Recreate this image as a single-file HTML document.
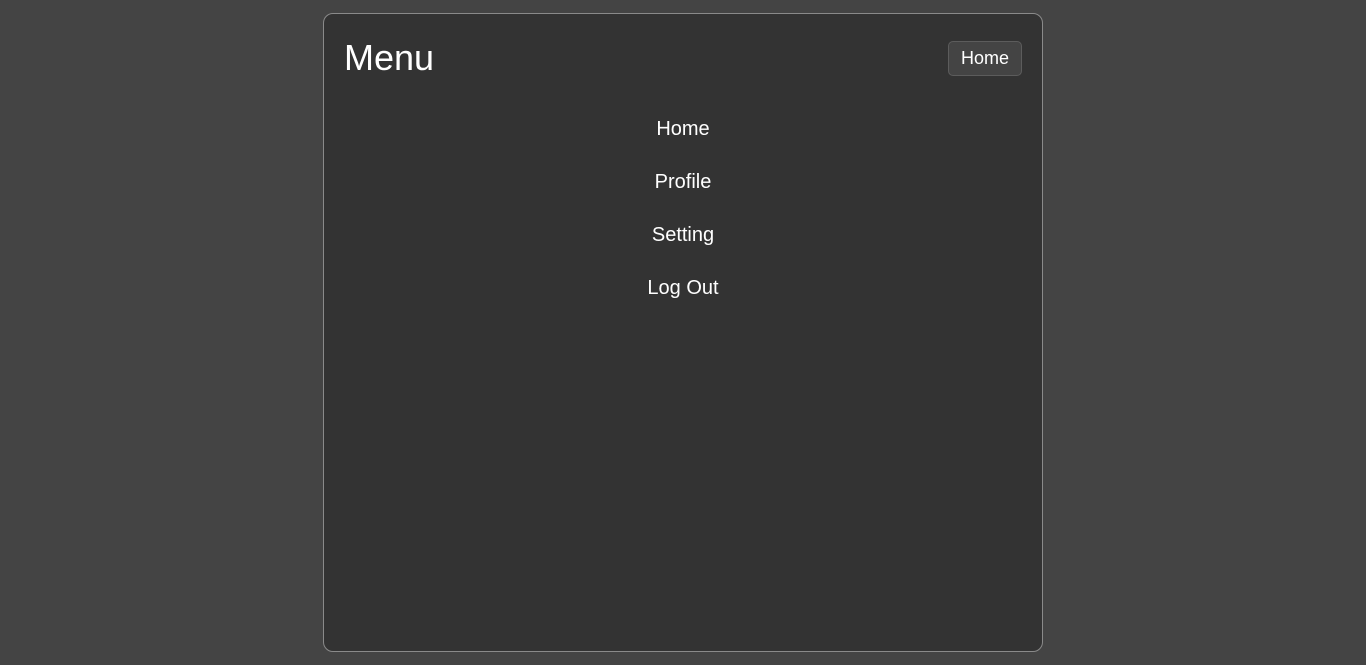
<!DOCTYPE html>
<html><head><style>
body{margin:0;background:#444;width:1366px;height:665px;font-family:"Liberation Sans",Arial,sans-serif;color:#fff;position:relative;overflow:hidden}
.card{position:absolute;left:323px;top:13px;width:718px;height:637px;background:#333;border:1px solid #8a8a8a;border-radius:10px}
h1{position:absolute;left:20px;top:24px;margin:0;font-size:36px;font-weight:normal;line-height:40px}
.btn{position:absolute;left:624px;top:27px;width:74px;height:35px;box-sizing:border-box;background:#444;border:1px solid #5c5c5c;border-radius:5px;font-size:18px;text-align:center;line-height:33px}
.item{position:absolute;left:0;width:718px;text-align:center;font-size:20px;line-height:24px}
</style></head><body>
<div class="card">
<h1>Menu</h1>
<div class="btn">Home</div>
<div class="item" style="top:103px">Home</div>
<div class="item" style="top:156px">Profile</div>
<div class="item" style="top:209px">Setting</div>
<div class="item" style="top:262px">Log Out</div>
</div>
</body></html>
